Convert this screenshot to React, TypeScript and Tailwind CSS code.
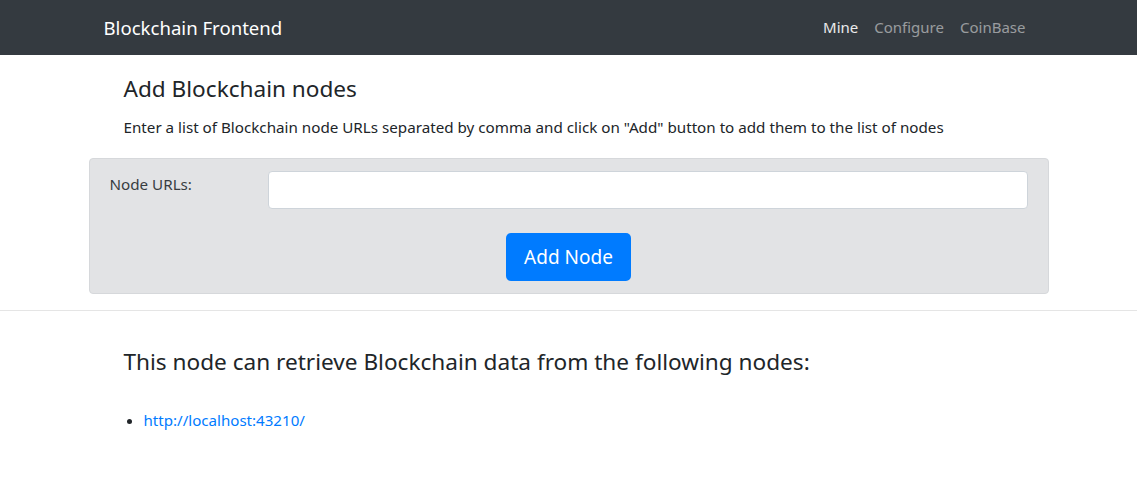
import React from 'react';

const App: React.FC = () => {
  return (
    <div className="min-h-screen bg-white text-[#212529] font-['Noto_Sans',sans-serif]">
      <nav className="h-[55px] bg-[#343a40]">
        <div className="mx-auto flex h-full w-[960px] items-center justify-between px-[15px]">
          <a href="#" className="text-[18.6px] text-white">
            Blockchain Frontend
          </a>
          <div className="flex text-[15px]">
            <a href="#" className="px-2 text-white/90">
              Mine
            </a>
            <a href="#" className="px-2 text-white/50">
              Configure
            </a>
            <a href="#" className="px-2 text-white/50">
              CoinBase
            </a>
          </div>
        </div>
      </nav>

      <div className="mx-auto w-[960px]">
        <div className="px-[35px]">
          <h4 className="mt-[19px] text-[22.6px] leading-[29px]">Add Blockchain nodes</h4>
          <p className="mt-[12px] text-[15.2px] leading-[24px]">
            Enter a list of Blockchain node URLs separated by comma and click on "Add" button to add them to the list of nodes
          </p>
        </div>

        <div className="mt-[19px] rounded border border-[#d6d8db] bg-[#e2e3e5] px-5 py-3 text-[#383d41]">
          <div className="flex">
            <label className="w-[158px] pt-[1px] text-[15.2px] leading-[24px]">Node URLs:</label>
            <input
              type="text"
              className="h-[38px] flex-1 rounded border border-[#ced4da] bg-white px-3 outline-none"
            />
          </div>
          <div className="mt-6 flex justify-center">
            <button className="h-[48px] w-[125px] rounded-[5px] bg-[#007bff] text-[19px] text-white">
              Add Node
            </button>
          </div>
        </div>
      </div>

      <hr className="mt-4 border-t border-black/10" />

      <div className="mx-auto w-[960px] px-[15px]">
        <h3 className="mt-[36px] pl-5 text-[22.6px] leading-[30px]">
          This node can retrieve Blockchain data from the following nodes:
        </h3>
        <ul className="mt-[31px] list-disc pl-10 text-[15.1px] leading-[24px]">
          <li>
            <a href="#" className="text-[#007bff]">
              http://localhost:43210/
            </a>
          </li>
        </ul>
      </div>
    </div>
  );
};

export default App;
